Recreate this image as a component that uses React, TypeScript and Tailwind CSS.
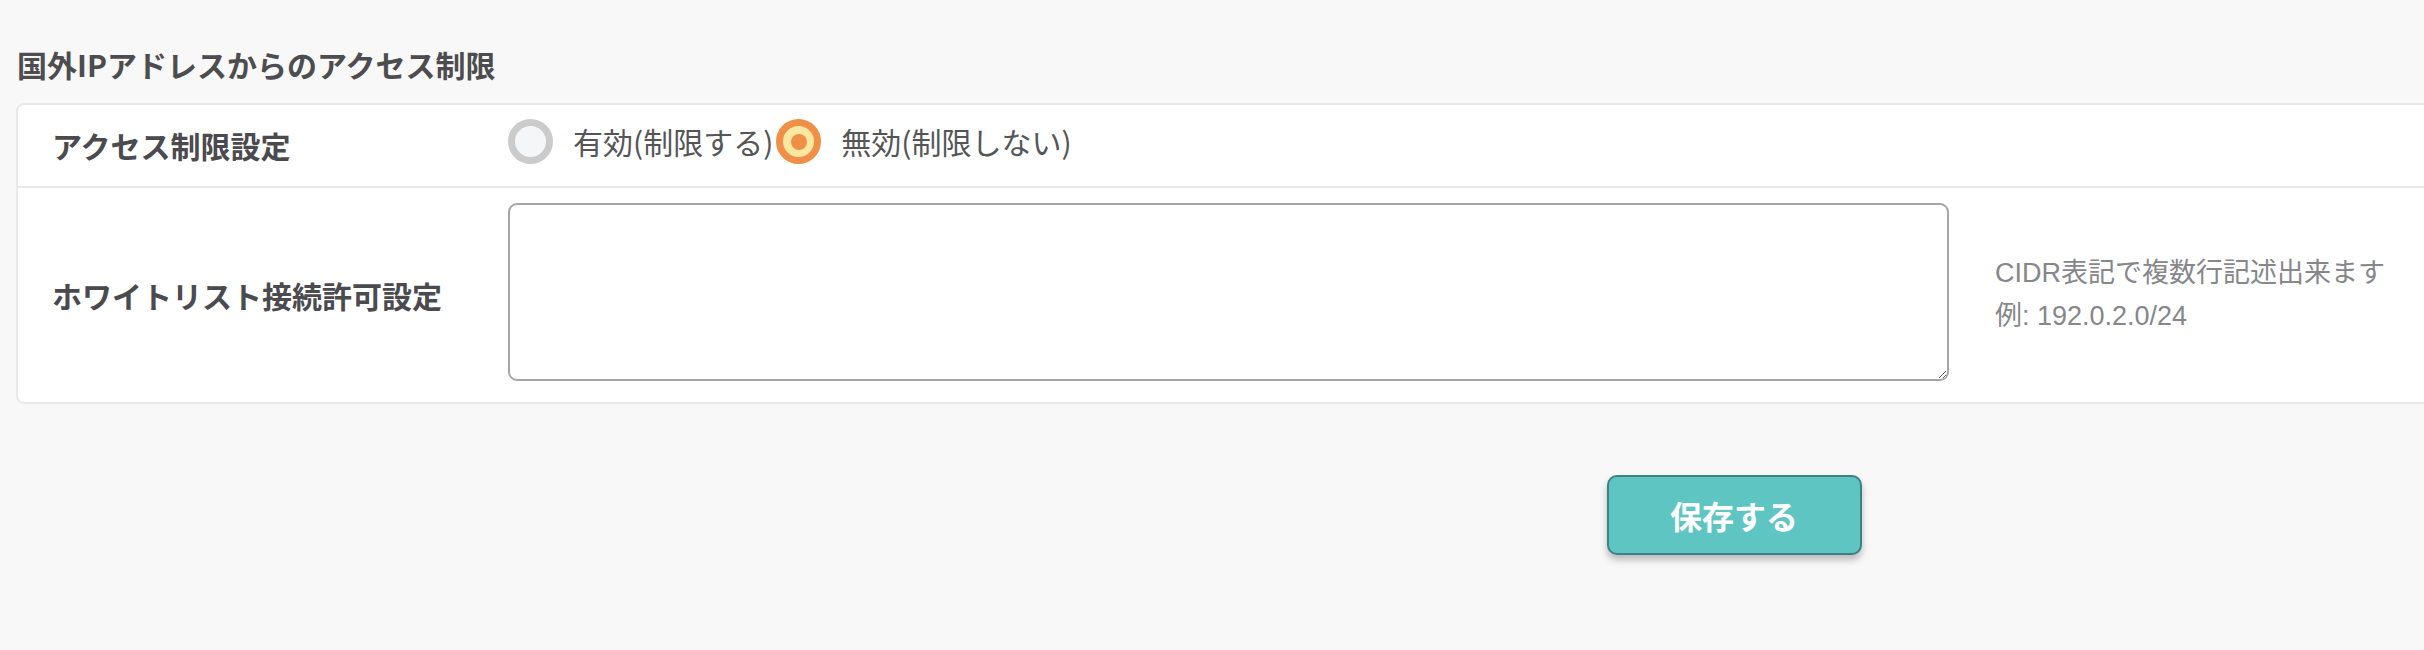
import React from 'react';

const jp = { fontFamily: '"Noto Sans CJK JP", "Noto Sans", sans-serif' };
const hint = { fontFamily: '"Liberation Sans", "Noto Sans CJK JP", sans-serif' };

const Radio = ({ checked }: { checked: boolean }) =>
  checked ? (
    <span className="flex items-center justify-center w-[45px] h-[45px] shrink-0 rounded-full border-[7px] border-[#f08f47] bg-[#fbe8a0]">
      <span className="w-[16px] h-[16px] rounded-full bg-[#f08f47]" />
    </span>
  ) : (
    <span className="w-[45px] h-[45px] shrink-0 rounded-full border-[7px] border-[#cbcbcb] bg-[#f5f6f8]" />
  );

const App = () => {
  return (
    <div className="w-full h-[650px] overflow-hidden bg-[#f8f8f8]" style={jp}>
      <div className="w-[3436px] ml-[16px] pt-[44px]">
        <h2 className="text-[30px] leading-[40px] font-bold text-[#4d4d4f] ml-[1px]">
          国外IPアドレスからのアクセス制限
        </h2>

        <div className="mt-[19px] bg-white border-2 border-[#e9e9e9] rounded-lg">
          <div className="flex items-center h-[81px]">
            <div className="w-[490px] pl-[34px] text-[30px] font-bold text-[#4a4a4f]">アクセス制限設定</div>
            <div className="flex items-center text-[30px] text-[#555558] -mt-[8px]">
              <Radio checked={false} />
              <span className="ml-[20px] mr-[3px]">有効(制限する)</span>
              <Radio checked />
              <span className="ml-[20px]">無効(制限しない)</span>
            </div>
          </div>

          <div className="flex items-center h-[216px] border-t-2 border-[#e9e9e9]">
            <div className="w-[490px] pl-[34px] text-[30px] font-bold text-[#4a4a4f]">ホワイトリスト接続許可設定</div>
            <textarea className="self-start mt-[15px] w-[1441px] h-[178px] border-2 border-[#a5a5aa] rounded-[9px] bg-white outline-none" />
            <div className="ml-[46px] text-[27px] leading-[43px] text-[#86868b]" style={hint}>
              <div>CIDR表記で複数行記述出来ます</div>
              <div>例: 192.0.2.0/24</div>
            </div>
          </div>
        </div>

        <div className="flex justify-center mt-[71px]">
          <button className="w-[255px] h-[80px] rounded-[10px] border-2 border-[#3d8283] bg-[#5fc5c3] text-white text-[32px] font-bold shadow-[0_5px_7px_rgba(0,0,0,0.25)]">
            保存する
          </button>
        </div>
      </div>
    </div>
  );
};

export default App;
